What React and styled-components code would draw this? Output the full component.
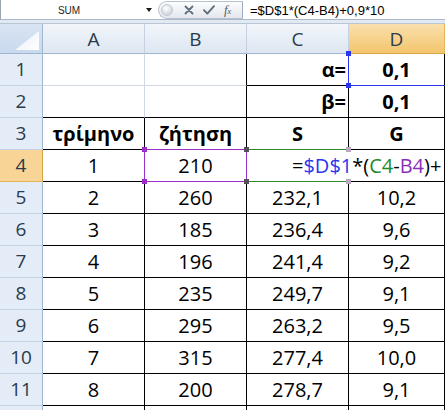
import React from "react";
import styled, { createGlobalStyle, css } from "styled-components";

const GlobalStyle = createGlobalStyle`
  html, body { margin: 0; padding: 0; background: #ffffff; }
  body { overflow: hidden; }
  * { box-sizing: border-box; }
`;

const Window = styled.div`
  width: 445px;
  height: 410px;
  overflow: hidden;
  background: #ffffff;
  display: flex;
  flex-direction: column;
`;

const FormulaBar = styled.div`
  height: 20px;
  flex: none;
  display: flex;
  align-items: center;
  background: #ffffff;
  border-left: 1px solid #9aa6b4;
  border-bottom: 1px solid #a9b8cb;
`;

const NameBox = styled.div`
  width: 136px;
  text-align: center;
  font-family: "Liberation Sans", Arial, sans-serif;
  font-size: 10px;
  color: #1e1e1e;
  padding-top: 1px;
`;

const DropArrow = styled.div`
  margin-left: 9px;
  width: 0;
  height: 0;
  border-left: 3px solid transparent;
  border-right: 3px solid transparent;
  border-top: 4px solid #1a1a1a;
`;

const FxGroup = styled.div`
  margin-left: 6px;
  width: 85px;
  height: 18px;
  display: flex;
  align-items: center;
  border: 1px solid #b7c1cd;
  border-right: 1px solid #9faabb;
  border-radius: 9px 0 0 9px;
  background: linear-gradient(#fbfcfd, #e4e8ee);
  padding-left: 2px;
`;

const Knob = styled.div`
  width: 12px;
  height: 12px;
  border-radius: 50%;
  background: radial-gradient(circle at 40% 35%, #ffffff, #d2d7de 70%);
  border: 1px solid #c3c9d1;
`;

const IconBtn = styled.div`
  margin-left: ${(p) => p.$ml}px;
  display: flex;
  align-items: center;
  justify-content: center;
  color: #5d6b7b;
`;

const FxLabel = styled.span`
  font-family: "Liberation Serif", "Times New Roman", serif;
  font-style: italic;
  font-size: 13px;
  color: #56616d;
  letter-spacing: -0.5px;
  small { font-size: 9px; }
`;

const FormulaText = styled.div`
  padding-left: 7px;
  font-family: "Liberation Sans", Arial, sans-serif;
  font-size: 13px;
  color: #000000;
  white-space: nowrap;
  padding-top: 1px;
`;

const Strip = styled.div`
  height: 4px;
  flex: none;
  background: #e3e9f1;
  border-bottom: 1px solid #b8c5d6;
`;

const Sheet = styled.div`
  display: grid;
  grid-template-columns: 43px 102px 102px 102px 96px;
  grid-template-rows: 30px repeat(12, 32px);
  background: #ffffff;
`;

const headFont = css`
  font-family: "Open Sans", "Liberation Sans", sans-serif;
  font-size: 19px;
  color: #2a3b4d;
  line-height: 1;
  display: flex;
  align-items: center;
  justify-content: center;
`;

const Corner = styled.div`
  position: relative;
  background: linear-gradient(#d9e4f3, #c9d9ee);
  border-right: 1px solid #9eb6ce;
  border-bottom: 1px solid #9eb6ce;
  &::after {
    content: "";
    position: absolute;
    left: 15px;
    top: 7px;
    width: 24px;
    height: 19px;
    background: linear-gradient(135deg, #e8eef7, #ffffff);
    clip-path: polygon(100% 0, 100% 100%, 0 100%);
  }
`;

const ColHead = styled.div`
  ${headFont}
  padding-top: 1px;
  border-right: 1px solid ${(p) => (p.$active ? "#e3b45c" : "#c5d1df")};
  border-bottom: 1px solid ${(p) => (p.$active ? "#d7a443" : "#9eb6ce")};
  background: ${(p) =>
    p.$active
      ? "linear-gradient(#fae0ae, #f3c56c)"
      : "linear-gradient(#f2f6fb, #dde6f1)"};
`;

const RowHead = styled.div`
  ${headFont}
  border-right: 1px solid ${(p) => (p.$active ? "#d7a443" : "#9eb6ce")};
  border-bottom: 1px solid ${(p) => (p.$active ? "#e3b45c" : "#c5d2e2")};
  background: ${(p) => (p.$active ? "#f8d596" : "#e4ecf7")};
`;

const Cell = styled.div`
  position: relative;
  display: flex;
  align-items: center;
  justify-content: ${(p) => (p.$align === "right" ? "flex-end" : p.$align === "left" ? "flex-start" : "center")};
  padding: ${(p) => (p.$align === "right" ? "0 2px 0 0" : p.$align === "left" ? `0 0 0 ${p.$indent || 0}px` : "0")};
  font-family: "Open Sans", "Liberation Sans", sans-serif;
  font-size: 20px;
  line-height: 1;
  font-weight: ${(p) => (p.$bold ? 700 : 400)};
  color: #000000;
  white-space: nowrap;
  z-index: ${(p) => (p.$front ? 2 : "auto")};
  border-right: 1px solid ${(p) => p.$rb || "#000000"};
  border-bottom: 1px solid ${(p) => p.$bb || "#000000"};
`;

const RefBox = styled.div`
  position: absolute;
  top: -1px;
  left: -1px;
  right: ${(p) => (p.$open ? "-20px" : "-1px")};
  bottom: -1px;
  pointer-events: none;
  z-index: 3;
  border-left: 1px solid ${(p) => p.$color};
  border-bottom: 1px solid ${(p) => p.$color};
  border-top: 1px solid ${(p) => (p.$noTop ? "transparent" : p.$color)};
  border-right: 1px solid ${(p) => (p.$noRight ? "transparent" : p.$color)};
`;

const Handle = styled.span`
  position: absolute;
  width: 5px;
  height: 5px;
  background: ${(p) => p.$color};
  ${(p) => (p.$v === "t" ? "top: -3px;" : "bottom: -3px;")}
  ${(p) => (p.$h === "l" ? "left: -3px;" : "right: -3px;")}
`;

const Ref = styled.span`
  color: ${(p) => p.$c};
`;

const GRAY = "#d0d7e5";

const data = [
  ["2", "260", "232,1", "10,2"],
  ["3", "185", "236,4", "9,6"],
  ["4", "196", "241,4", "9,2"],
  ["5", "235", "249,7", "9,1"],
  ["6", "295", "263,2", "9,5"],
  ["7", "315", "277,4", "10,0"],
  ["8", "200", "278,7", "9,1"],
];

const BLUE = "#2a35f0";
const PURPLE = "#9a2fc9";
const GREEN = "#2f8a2f";

export default function App() {
  return (
    <>
      <GlobalStyle />
      <Window>
        <FormulaBar>
          <NameBox>SUM</NameBox>
          <DropArrow />
          <FxGroup>
            <Knob />
            <IconBtn $ml={11}>
              <svg width="10" height="10" viewBox="0 0 10 10">
                <path d="M1.5 1.5 L8.5 8.5 M8.5 1.5 L1.5 8.5" stroke="#5f6d7c" strokeWidth="1.8" strokeLinecap="round" />
              </svg>
            </IconBtn>
            <IconBtn $ml={9}>
              <svg width="12" height="10" viewBox="0 0 12 10">
                <path d="M1 5.2 L4.3 8.6 L11 1.2" stroke="#5f6d7c" strokeWidth="1.9" fill="none" strokeLinecap="round" strokeLinejoin="round" />
              </svg>
            </IconBtn>
            <IconBtn $ml={9}>
              <FxLabel>
                f<small>x</small>
              </FxLabel>
            </IconBtn>
          </FxGroup>
          <FormulaText>=$D$1*(C4-B4)+0,9*10</FormulaText>
        </FormulaBar>
        <Strip />
        <Sheet>
          <Corner />
          <ColHead>A</ColHead>
          <ColHead>B</ColHead>
          <ColHead>C</ColHead>
          <ColHead $active>D</ColHead>

          <RowHead>1</RowHead>
          <Cell $rb={GRAY} $bb={GRAY} />
          <Cell $bb={GRAY} />
          <Cell $align="right" $bold>α=</Cell>
          <Cell $bold>
            0,1
            <RefBox $color={BLUE} $noTop $noRight $open>
              <Handle $v="t" $h="l" $color={BLUE} />
              <Handle $v="b" $h="l" $color={BLUE} />
            </RefBox>
          </Cell>

          <RowHead>2</RowHead>
          <Cell $rb={GRAY} />
          <Cell />
          <Cell $align="right" $bold>β=</Cell>
          <Cell $bold>0,1</Cell>

          <RowHead>3</RowHead>
          <Cell $bold>τρίμηνο</Cell>
          <Cell $bold>ζήτηση</Cell>
          <Cell $bold>S</Cell>
          <Cell $bold>G</Cell>

          <RowHead $active>4</RowHead>
          <Cell>1</Cell>
          <Cell>
            210
            <RefBox $color={PURPLE}>
              <Handle $v="t" $h="l" $color={PURPLE} />
              <Handle $v="b" $h="l" $color={PURPLE} />
              <Handle $v="t" $h="r" $color="#55505a" />
              <Handle $v="b" $h="r" $color="#55505a" />
            </RefBox>
          </Cell>
          <Cell $align="left" $indent={45} $front $rb="transparent">
            =<Ref $c={BLUE}>$D$1</Ref>*(<Ref $c="#1f8a2a">C4</Ref>-<Ref $c="#8a2fb8">B4</Ref>)+
            <RefBox $color={GREEN} $noRight>
              <Handle $v="t" $h="r" $color="#b9a7bd" />
              <Handle $v="b" $h="r" $color="#b9a7bd" />
            </RefBox>
          </Cell>
          <Cell />

          {data.map((r, i) => (
            <React.Fragment key={i}>
              <RowHead>{i + 5}</RowHead>
              <Cell>{r[0]}</Cell>
              <Cell>{r[1]}</Cell>
              <Cell>{r[2]}</Cell>
              <Cell>{r[3]}</Cell>
            </React.Fragment>
          ))}

          <RowHead />
          <Cell />
          <Cell />
          <Cell />
          <Cell />
        </Sheet>
      </Window>
    </>
  );
}
